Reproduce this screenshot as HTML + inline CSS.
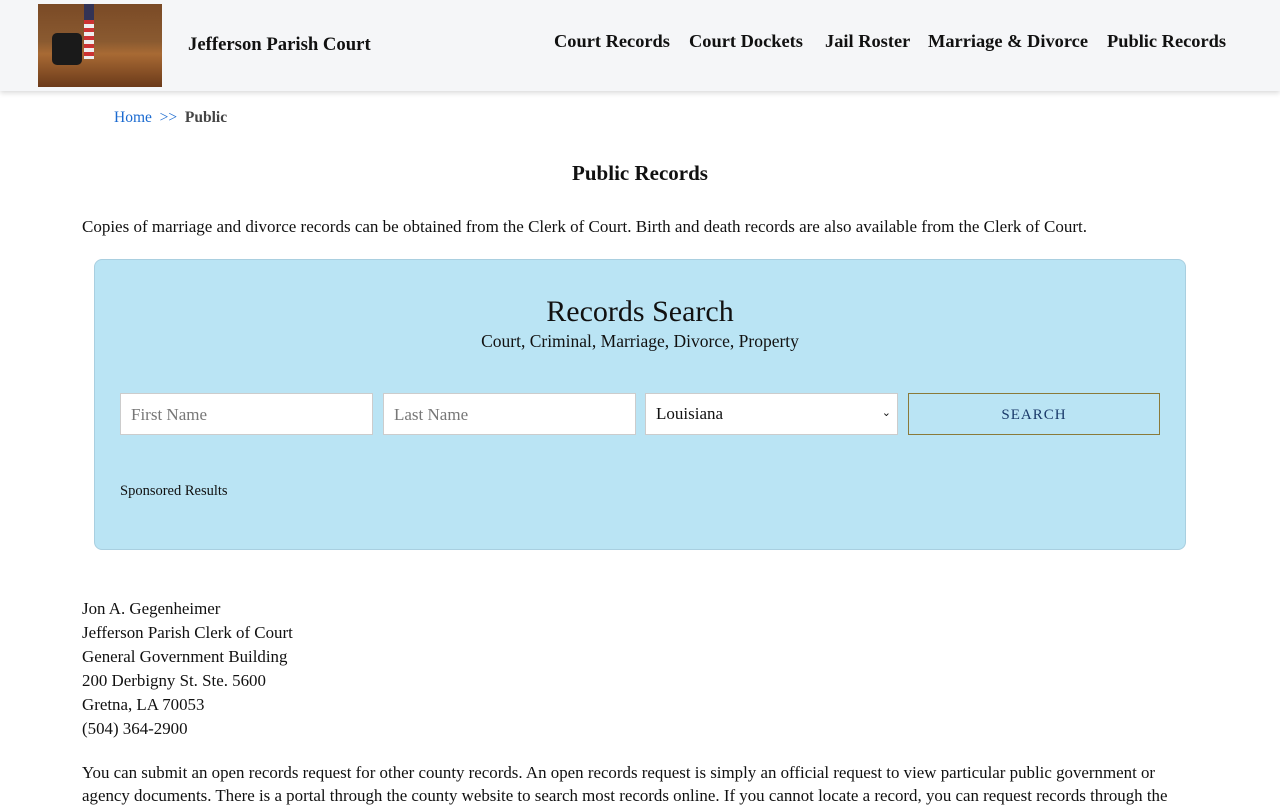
<!DOCTYPE html>
<html><head><style>
body{margin:0;font-family:"Liberation Serif",serif;color:#111;background:#fff;width:1280px;height:800px;overflow:hidden;position:relative}
.hdr{position:absolute;left:0;top:0;width:1280px;height:91px;background:#f5f6f8;box-shadow:0 2px 5px rgba(0,0,0,.15)}
.logo{position:absolute;left:38px;top:4px;width:124px;height:83px;background:linear-gradient(180deg,#7a4a26 0%,#8a5a30 45%,#a86a34 60%,#6b3a1a 100%)}
.chair{position:absolute;left:14px;top:29px;width:30px;height:32px;background:#1a1a1a;border-radius:5px}
.flag{position:absolute;left:46px;top:0;width:10px;height:55px;background:repeating-linear-gradient(180deg,#c33 0 4px,#eee 4px 8px)}
.flag:before{content:"";position:absolute;left:0;top:0;width:10px;height:16px;background:#335}
.title{position:absolute;left:188px;top:34px;font-size:18.7px;font-weight:bold}
.nav{position:absolute;top:31px;font-size:18.4px;font-weight:bold}
.bc{position:absolute;left:114px;top:109px;font-size:15.5px}
h1{position:absolute;top:161px;left:0;width:1280px;text-align:center;font-size:21px;margin:0}
p{margin:0}
.intro{position:absolute;left:82px;top:217px;font-size:17px}
.box{position:absolute;left:94px;top:259px;width:1090px;height:289px;background:#bae4f4;border:1px solid #a9cfe0;border-radius:8px}
.rs{position:absolute;top:295px;width:1280px;text-align:center;font-size:30px}
.rs2{position:absolute;top:331px;width:1280px;text-align:center;font-size:17.5px}
.in{position:absolute;top:393px;height:42px;width:253px;background:#fff;border:1px solid #ccc;box-sizing:border-box;font-size:17px;color:#777;padding:11px 10px}
.btn{position:absolute;left:908px;top:393px;width:252px;height:42px;border:1px solid #8a7a3a;box-sizing:border-box;text-align:center;font-size:15px;color:#1a3a6a;letter-spacing:1px;padding-top:13px}
.addr{position:absolute;left:82px;top:597px;font-size:16.9px;line-height:24px}
.last{position:absolute;left:82px;top:761px;width:1120px;font-size:16.9px;line-height:23px}
</style></head><body>
<div class="hdr">
<div class="logo"><div class="chair"></div><div class="flag"></div></div>
<div class="title">Jefferson Parish Court</div>
<div class="nav" style="left:554px">Court Records</div>
<div class="nav" style="left:689px">Court Dockets</div>
<div class="nav" style="left:825px">Jail Roster</div>
<div class="nav" style="left:928px">Marriage &amp; Divorce</div>
<div class="nav" style="left:1107px">Public Records</div>
</div>
<div class="bc"><span style="color:#1a6ad0">Home &nbsp;&gt;&gt;</span> &nbsp;<b style="color:#444">Public</b></div>
<h1>Public Records</h1>
<p class="intro">Copies of marriage and divorce records can be obtained from the Clerk of Court. Birth and death records are also available from the Clerk of Court.</p>
<div class="box"></div>
<div class="rs">Records Search</div>
<div class="rs2">Court, Criminal, Marriage, Divorce, Property</div>
<div class="in" style="left:120px">First Name</div>
<div class="in" style="left:383px">Last Name</div>
<div class="in" style="left:645px;color:#111;padding-top:10px">Louisiana<span style="position:absolute;right:6px;top:12px;font-size:11px">&#8964;</span></div>
<div class="btn">SEARCH</div>
<div style="position:absolute;left:120px;top:483px;font-size:14.5px">Sponsored Results</div>
<div class="addr">Jon A. Gegenheimer<br>Jefferson Parish Clerk of Court<br>General Government Building<br>200 Derbigny St. Ste. 5600<br>Gretna, LA 70053<br>(504) 364-2900</div>
<p class="last">You can submit an open records request for other county records. An open records request is simply an official request to view particular public government or agency documents. There is a portal through the county website to search most records online. If you cannot locate a record, you can request records through the</p>
</body></html>
